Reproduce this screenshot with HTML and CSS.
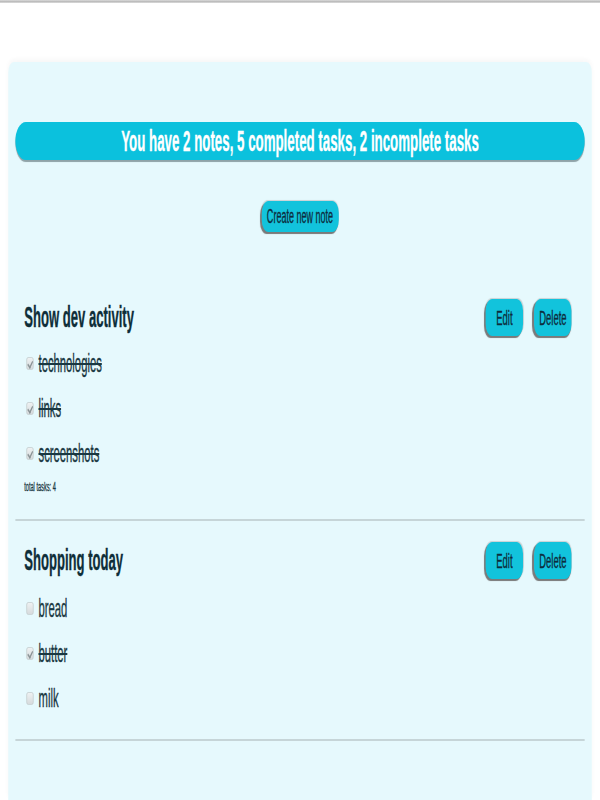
FILE: index.html
```html
<!DOCTYPE html>
<html lang="en">
<head>
<meta charset="utf-8">
<title>Notes</title>
<link rel="stylesheet" href="styles.css">
</head>
<body>
<div class="topline"></div>
<div class="viewport">
<div class="page">
  <main class="board">
    <div class="summary"><span class="txt">You have 2 notes, 5 completed tasks, 2 incomplete tasks</span></div>
    <div class="create-row"><button class="btn btn-create"><span class="txt">Create new note</span></button></div>

    <section class="note">
      <div class="note-head">
        <h2 class="note-title"><span class="txt txt-left">Show dev activity</span></h2>
        <div class="actions">
          <button class="btn btn-small"><span class="txt">Edit</span></button>
          <button class="btn btn-small"><span class="txt">Delete</span></button>
        </div>
      </div>
      <ul class="tasks">
        <li class="task done"><input type="checkbox" class="check" checked><span class="txt txt-left">technologies</span></li>
        <li class="task done"><input type="checkbox" class="check" checked><span class="txt txt-left">links</span></li>
        <li class="task done"><input type="checkbox" class="check" checked><span class="txt txt-left">screenshots</span></li>
      </ul>
      <p class="total"><span class="txt txt-left">total tasks: 4</span></p>
    </section>

    <section class="note">
      <div class="note-head">
        <h2 class="note-title"><span class="txt txt-left">Shopping today</span></h2>
        <div class="actions">
          <button class="btn btn-small"><span class="txt">Edit</span></button>
          <button class="btn btn-small"><span class="txt">Delete</span></button>
        </div>
      </div>
      <ul class="tasks">
        <li class="task"><input type="checkbox" class="check"><span class="txt txt-left">bread</span></li>
        <li class="task done"><input type="checkbox" class="check" checked><span class="txt txt-left">butter</span></li>
        <li class="task"><input type="checkbox" class="check"><span class="txt txt-left">milk</span></li>
      </ul>
    </section>
  </main>
</div>
</div>
</body>
</html>
```

FILE: styles.css
```css
html, body {
  margin: 0;
  padding: 0;
  background: #ffffff;
  overflow: hidden;
  height: 800px;
}

body {
  font-family: "Liberation Sans", Arial, sans-serif;
  color: #11323c;
}

.topline {
  height: 3px;
  background: linear-gradient(#dcdcdc, #bdbdbd, #dcdcdc);
}

.viewport {
  width: 600px;
  height: 797px;
  overflow: hidden;
}

.page {
  width: 1091px;
  transform: scaleX(0.55);
  transform-origin: 0 0;
}

.txt {
  display: inline-block;
  white-space: nowrap;
  transform: scaleX(0.82);
  transform-origin: 50% 50%;
  -webkit-text-stroke: 0.35px currentColor;
}

.txt-left {
  transform-origin: 0 50%;
}

.board {
  margin: 59px 15px 0;
  min-height: 738px;
  box-sizing: border-box;
  background: #e6f9fd;
  border-radius: 10px 10px 0 0;
  padding: 60px 13px 40px;
  box-shadow: 0 -3px 6px rgba(0, 0, 0, 0.03);
}

.summary {
  height: 38px;
  display: flex;
  align-items: center;
  justify-content: center;
  background: #0bc1dd;
  border-radius: 20px;
  box-shadow: 0 2px 1px #8fa3a8;
  color: #ffffff;
  font-weight: bold;
  font-size: 29.5px;
}

.create-row {
  display: flex;
  justify-content: center;
  margin-top: 41px;
}

.btn {
  font-family: "Liberation Sans", Arial, sans-serif;
  display: flex;
  align-items: center;
  justify-content: center;
  background: #12c3dc;
  color: #0d2c3c;
  border: none;
  border-radius: 12px;
  box-shadow: -2px 2px 1px #7a7a7a, 0 -1px 1px #c9d3d6;
  padding: 0;
  cursor: pointer;
}

.btn-create {
  width: 140px;
  height: 31px;
  font-size: 20px;
}

.note {
  padding: 0 24px 23px 16px;
  border-bottom: 2px solid #c6d5d8;
}

.note:first-of-type {
  margin-top: 67px;
}

.note + .note {
  margin-top: 21px;
  padding-bottom: 18px;
}

.note-head {
  display: flex;
  justify-content: space-between;
  align-items: center;
  height: 37px;
}

.note-title {
  margin: 0;
  font-size: 29px;
  font-weight: bold;
  color: #0e2e39;
}

.actions {
  display: flex;
  gap: 20px;
}

.btn-small {
  width: 68px;
  height: 37px;
  font-size: 21px;
}

.tasks {
  list-style: none;
  margin: 5px 0 0;
  padding: 0;
}

.note + .note .tasks {
  margin-top: 7px;
}

.task {
  height: 45px;
  display: flex;
  align-items: center;
  font-size: 25px;
  color: #1a3842;
}

.task.done .txt {
  text-decoration: line-through;
}

.check {
  appearance: none;
  -webkit-appearance: none;
  width: 13px;
  height: 13px;
  margin: 3px 9px 3px 4px;
  box-sizing: border-box;
  border: 1px solid #c4cbcd;
  border-radius: 3px;
  background: linear-gradient(#eef1f2, #d6dbdd);
  position: relative;
}

.check:checked::after {
  content: "";
  position: absolute;
  left: 3px;
  top: 1px;
  width: 4px;
  height: 7px;
  border-right: 2px solid #8a9396;
  border-bottom: 2px solid #8a9396;
  transform: rotate(40deg);
}

.total {
  margin: 2px 0 0;
  font-size: 12.5px;
  height: 18px;
  line-height: 18px;
  color: #1a3842;
}
```
